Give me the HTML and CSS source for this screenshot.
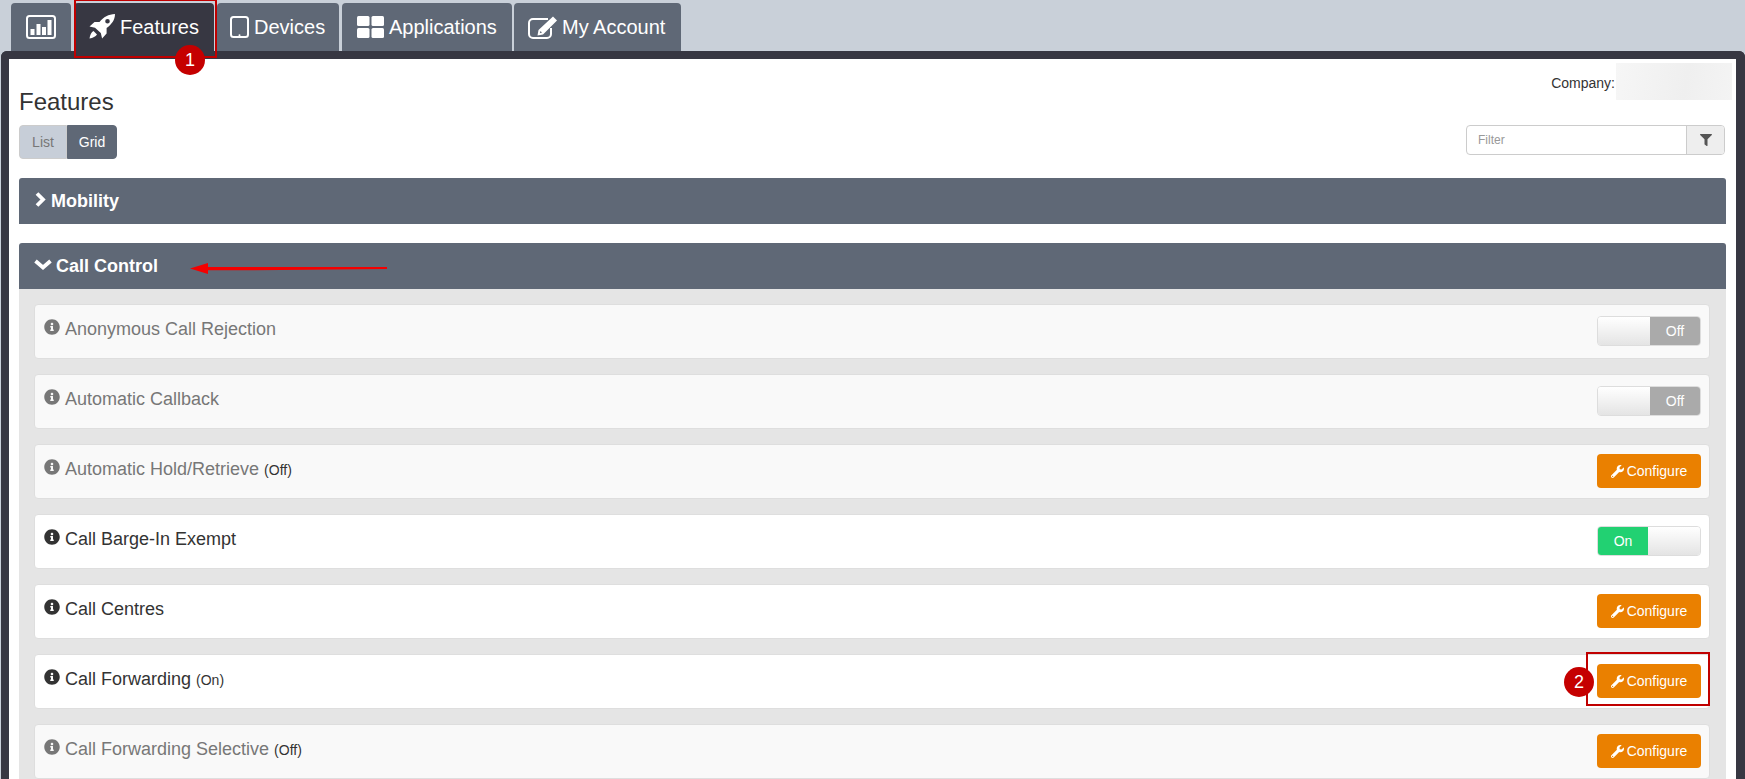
FILE: index.html
```html
<!DOCTYPE html>
<html lang="en">
<head>
<meta charset="utf-8">
<title>Features</title>
<link rel="stylesheet" href="styles.css">
</head>
<body>
<svg class="sprites" width="0" height="0" aria-hidden="true">
  <symbol id="i-info" viewBox="0 0 512 512"><path d="M256 8C119.043 8 8 119.083 8 256c0 136.997 111.043 248 248 248s248-111.003 248-248C504 119.083 392.957 8 256 8zm0 110c23.196 0 42 18.804 42 42s-18.804 42-42 42-42-18.804-42-42 18.804-42 42-42zm56 254c0 6.627-5.373 12-12 12h-88c-6.627 0-12-5.373-12-12v-24c0-6.627 5.373-12 12-12h12v-64h-12c-6.627 0-12-5.373-12-12v-24c0-6.627 5.373-12 12-12h64c6.627 0 12 5.373 12 12v100h12c6.627 0 12 5.373 12 12v24z"/></symbol>
  <symbol id="i-wrench" viewBox="0 0 512 512"><path d="M507.73 109.1c-2.24-9.03-13.54-12.09-20.12-5.51l-74.36 74.36-67.88-11.31-11.31-67.88 74.36-74.36c6.62-6.62 3.43-17.9-5.66-20.16-47.38-11.74-99.55.91-136.58 37.93-39.64 39.64-50.55 97.1-34.05 147.2L18.74 402.76c-24.99 24.99-24.99 65.51 0 90.5 24.99 24.99 65.51 24.99 90.5 0l213.21-213.21c50.12 16.71 107.47 5.68 147.37-34.22 37.07-37.07 49.7-89.32 37.91-136.73zM64 472c-13.25 0-24-10.75-24-24 0-13.26 10.75-24 24-24s24 10.74 24 24c0 13.25-10.75 24-24 24z"/></symbol>
</svg>

<nav class="tabs">
  <a class="tab tab-icon">
    <svg class="ico-stats" viewBox="0 0 30 24"><rect x="1" y="1" width="28" height="22" rx="2.5" fill="none" stroke="#fff" stroke-width="2"/><rect x="4.500" y="14" width="4" height="6" fill="#fff"/><rect x="10.500" y="9" width="4" height="11" fill="#fff"/><rect x="16" y="12" width="4" height="8" fill="#fff"/><rect x="21.500" y="5" width="4" height="15" fill="#fff"/></svg>
  </a>
  <a class="tab tab-active">
    <svg class="ico-rocket" viewBox="0 0 28 26"><path fill="#fff" fill-rule="evenodd" d="M27 0c-6.500.2-11.500 3-15.500 8H6.500L1.500 12.500l5.500 1.200 5.800 5.300 1.300 5.500 4.500-5V14C23.500 10.500 27 6 27 0zM19.500 5a2.300 2.300 0 1 1 0 4.600 2.300 2.300 0 0 1 0-4.600z"/><path fill="#fff" d="M5.500 17c-2 1-3.500 4-4 7.500 3.500-.5 6-2 7.500-4z"/></svg>
    <span>Features</span>
  </a>
  <a class="tab tab-devices">
    <svg class="ico-tablet" viewBox="0 0 19 22"><rect x="1" y="1" width="17" height="20" rx="2.500" fill="none" stroke="#fff" stroke-width="2"/><circle cx="9.500" cy="19.300" r="1" fill="#fff"/></svg>
    <span>Devices</span>
  </a>
  <a class="tab tab-apps">
    <svg class="ico-grid" viewBox="0 0 27 22"><rect width="12.500" height="10" rx="1.500" fill="#fff"/><rect x="14.500" width="12.500" height="10" rx="1.500" fill="#fff"/><rect y="12" width="12.500" height="10" rx="1.500" fill="#fff"/><rect x="14.500" y="12" width="12.500" height="10" rx="1.500" fill="#fff"/></svg>
    <span>Applications</span>
  </a>
  <a class="tab tab-account">
    <svg class="ico-edit" viewBox="0 0 29 23"><path d="M20 3H5A4 4 0 0 0 1 7V18A4 4 0 0 0 5 22H19A4 4 0 0 0 23 18V12" fill="none" stroke="#fff" stroke-width="2"/><path fill="#fff" fill-rule="evenodd" d="M25 .5 29 4.500 15 18.500 9.500 19.500 10.500 14zM12.500 15l-.7 2.200 2.200-.7z"/></svg>
    <span>My Account</span>
  </a>
</nav>

<main class="panel">
  <div class="panel-inner">
    <header class="head">
      <div class="head-left">
        <h1 class="title">Features</h1>
        <div class="view-switch">
          <button class="view-btn view-list">List</button>
          <button class="view-btn view-grid">Grid</button>
        </div>
      </div>
      <div class="head-right">
        <div class="company">
          <span class="company-label">Company:</span>
          <span class="company-blur"></span>
        </div>
        <div class="filter">
          <span class="filter-input">Filter</span>
          <span class="filter-addon"><svg class="ico-filter" viewBox="0 0 512 512"><path d="M487.976 0H24.028C2.71 0-8.047 25.866 7.058 40.971L192 225.941V432c0 7.831 3.821 15.17 10.237 19.662l80 55.98C298.02 518.69 320 507.493 320 487.98V225.941l184.947-184.97C520.021 25.896 509.338 0 487.976 0z"/></svg></span>
        </div>
      </div>
    </header>

    <section class="group">
      <h2 class="group-head">
        <svg class="ico-right" viewBox="0 0 11 15"><path d="M2 1.500 8 7.500 2 13.500" fill="none" stroke="#fff" stroke-width="3.800"/></svg>
        <span>Mobility</span>
      </h2>
    </section>

    <section class="group">
      <h2 class="group-head">
        <svg class="ico-down" viewBox="0 0 18 11"><path d="M1.500 2 9 8.500 16.500 2" fill="none" stroke="#fff" stroke-width="3.800"/></svg>
        <span>Call Control</span>
      </h2>
      <div class="group-body">
        <div class="row row-off">
          <div class="row-label"><svg class="ico-info"><use href="#i-info"/></svg><span>Anonymous Call Rejection</span></div>
          <div class="toggle"><span class="toggle-knob"></span><span class="toggle-off">Off</span></div>
        </div>
        <div class="row row-off">
          <div class="row-label"><svg class="ico-info"><use href="#i-info"/></svg><span>Automatic Callback</span></div>
          <div class="toggle"><span class="toggle-knob"></span><span class="toggle-off">Off</span></div>
        </div>
        <div class="row row-off">
          <div class="row-label"><svg class="ico-info"><use href="#i-info"/></svg><span>Automatic Hold/Retrieve <small>(Off)</small></span></div>
          <button class="configure"><svg class="ico-wrench"><use href="#i-wrench"/></svg>Configure</button>
        </div>
        <div class="row">
          <div class="row-label"><svg class="ico-info"><use href="#i-info"/></svg><span>Call Barge-In Exempt</span></div>
          <div class="toggle"><span class="toggle-on">On</span><span class="toggle-knob"></span></div>
        </div>
        <div class="row">
          <div class="row-label"><svg class="ico-info"><use href="#i-info"/></svg><span>Call Centres</span></div>
          <button class="configure"><svg class="ico-wrench"><use href="#i-wrench"/></svg>Configure</button>
        </div>
        <div class="row">
          <div class="row-label"><svg class="ico-info"><use href="#i-info"/></svg><span>Call Forwarding <small>(On)</small></span></div>
          <button class="configure"><svg class="ico-wrench"><use href="#i-wrench"/></svg>Configure</button>
        </div>
        <div class="row row-off">
          <div class="row-label"><svg class="ico-info"><use href="#i-info"/></svg><span>Call Forwarding Selective <small>(Off)</small></span></div>
          <button class="configure"><svg class="ico-wrench"><use href="#i-wrench"/></svg>Configure</button>
        </div>
      </div>
    </section>
  </div>
</main>

<div class="mark mark-box-1"></div>
<div class="mark mark-badge mark-badge-1">1</div>
<div class="mark mark-box-2"></div>
<div class="mark mark-badge mark-badge-2">2</div>
<svg class="mark mark-arrow" viewBox="0 0 197 12"><path d="M197 5V7L60 8.200H18V12L0 6.500 18 1V5H60z" fill="#f40000"/></svg>
</body>
</html>
```
FILE: styles.css
```css
html, body {
  margin: 0;
  height: 779px;
  overflow: hidden;
}
body {
  position: relative;
  background: #c9d0d9;
  font-family: "Liberation Sans", Arial, sans-serif;
  color: #333;
}
.sprites { position: absolute; }

/* tabs */
.tabs {
  display: flex;
  gap: 3px;
  padding: 3px 0 0 11px;
  height: 48px;
}
.tab {
  display: flex;
  align-items: center;
  gap: 5px;
  height: 48px;
  padding: 0 15px;
  box-sizing: border-box;
  background: #5f6876;
  border-radius: 4px 4px 0 0;
  color: #fff;
  font-size: 20px;
}
.tab svg { flex: none; }
.tab-icon { width: 60px; justify-content: center; padding: 0; }
.tab-active { width: 140px; background: #373742; padding-left: 14px; gap: 4px; }
.tab-devices { width: 122px; padding-left: 13px; gap: 5px; }
.tab-apps { width: 170px; padding-left: 15px; gap: 5px; }
.tab-account { width: 167px; margin-left: -1px; padding-left: 14px; gap: 5px; }
.ico-stats { width: 30px; height: 24px; }
.ico-rocket { width: 28px; height: 26px; }
.ico-tablet { width: 19px; height: 22px; }
.ico-grid { width: 27px; height: 22px; }
.ico-edit { width: 29px; height: 23px; }

/* panel */
.panel {
  margin-left: 1px;
  border: 8px solid #373742;
  border-right-width: 9px;
  border-bottom: 0;
  border-radius: 6px 6px 0 0;
  background: #fff;
  height: 720px;
  overflow: hidden;
}
.panel-inner { padding: 0 4px 0 10px; }

.head {
  display: flex;
  justify-content: space-between;
  align-items: flex-start;
  height: 119px;
}
.head-left { padding-top: 29px; }
.title {
  margin: 0 0 9px;
  font-size: 24px;
  font-weight: 400;
  line-height: 28px;
  color: #333;
}
.view-switch { display: flex; }
.view-btn {
  height: 34px;
  border: 1px solid #ccc;
  padding: 0;
  font: 14px "Liberation Sans", Arial, sans-serif;
}
.view-list {
  width: 48px;
  background: #c7ced8;
  color: #777;
  border-radius: 4px 0 0 4px;
}
.view-grid {
  width: 50px;
  background: #5f6876;
  border-color: #5f6876;
  color: #fff;
  border-radius: 0 4px 4px 0;
}
.head-right {
  display: flex;
  flex-direction: column;
  align-items: flex-end;
  padding-top: 4px;
}
.company {
  display: flex;
  align-items: center;
  height: 37px;
  font-size: 14px;
  gap: 1px;
}
.company-label { padding-top: 2px; }
.company-blur {
  display: block;
  width: 116px;
  height: 37px;
  background: linear-gradient(100deg, #f6f6f6, #efefef 60%, #f4f4f4);
}
.filter {
  display: flex;
  width: 259px;
  height: 30px;
  margin: 25px 7px 0 0;
  box-sizing: border-box;
  border: 1px solid #ccc;
  border-radius: 4px;
  font-size: 12px;
  color: #999;
}
.filter-input {
  flex: 1;
  padding-left: 11px;
  line-height: 28px;
}
.filter-addon {
  display: flex;
  align-items: center;
  justify-content: center;
  width: 37px;
  background: #eee;
  border-left: 1px solid #ccc;
  border-radius: 0 3px 3px 0;
}
.ico-filter { width: 12px; height: 12px; fill: #555; }

/* groups */
.group { margin: 0 6px 19px 0; }
.group-head {
  display: flex;
  align-items: center;
  gap: 4px;
  height: 46px;
  margin: 0;
  padding-left: 15px;
  background: #5f6876;
  border-radius: 3px 3px 0 0;
  color: #fff;
  font-size: 18px;
  font-weight: 700;
}
.ico-right { width: 11px; height: 15px; margin-top: -3px; margin: -3px 1px 0; }
.ico-down { width: 18px; height: 11px; margin-top: -3px; }
.group-body {
  display: flex;
  flex-direction: column;
  gap: 15px;
  padding: 15px 16px 20px 15px;
  background: #e5e5e5;
}
.row {
  display: flex;
  justify-content: space-between;
  align-items: center;
  height: 55px;
  box-sizing: border-box;
  padding: 0 8px 1px 9px;
  background: #fff;
  border: 1px solid #dedede;
  border-radius: 4px;
}
.row-off { background: #f9f9f9; }
.row-off .row-label { color: #777; }
.row-label {
  display: flex;
  align-items: flex-start;
  gap: 5px;
  height: 100%;
  padding-top: 14px;
  box-sizing: border-box;
  font-size: 18px;
  line-height: 20px;
  color: #333;
}
.row-label small { font-size: 14px; color: #333; }
.ico-info { width: 16px; height: 16px; margin-top: 0; fill: currentColor; }

.toggle {
  display: flex;
  width: 104px;
  height: 30px;
  box-sizing: border-box;
  border: 1px solid #ddd;
  border-radius: 4px;
  overflow: hidden;
  font-size: 14px;
  line-height: 28px;
  text-align: center;
  color: #fff;
}
.toggle-knob { flex: 1; background: linear-gradient(#fff, #e4e4e4); }
.toggle-off { width: 50px; background: #aaa; }
.toggle-on { width: 50px; background: #22d172; }

.configure {
  display: flex;
  align-items: center;
  justify-content: center;
  gap: 3px;
  width: 104px;
  height: 34px;
  padding: 0;
  border: 0;
  border-radius: 4px;
  background: #ea8000;
  color: #fff;
  font: 14px "Liberation Sans", Arial, sans-serif;
}
.ico-wrench { width: 13px; height: 13px; fill: #fff; }

/* annotations drawn over the screenshot */
.mark { position: absolute; box-sizing: border-box; }
.mark-box-1 { left: 74px; top: -1px; width: 143px; height: 59px; border: 2px solid #c00000; }
.mark-box-2 { left: 1586px; top: 652px; width: 124px; height: 54px; border: 2px solid #c00000; }
.mark-badge {
  width: 30px;
  height: 30px;
  border-radius: 50%;
  background: #c50000;
  color: #fff;
  font-size: 18px;
  line-height: 30px;
  text-align: center;
}
.mark-badge-1 { left: 175px; top: 45px; }
.mark-badge-2 { left: 1564px; top: 667px; }
.mark-arrow { left: 190px; top: 262px; width: 197px; height: 12px; }
```
